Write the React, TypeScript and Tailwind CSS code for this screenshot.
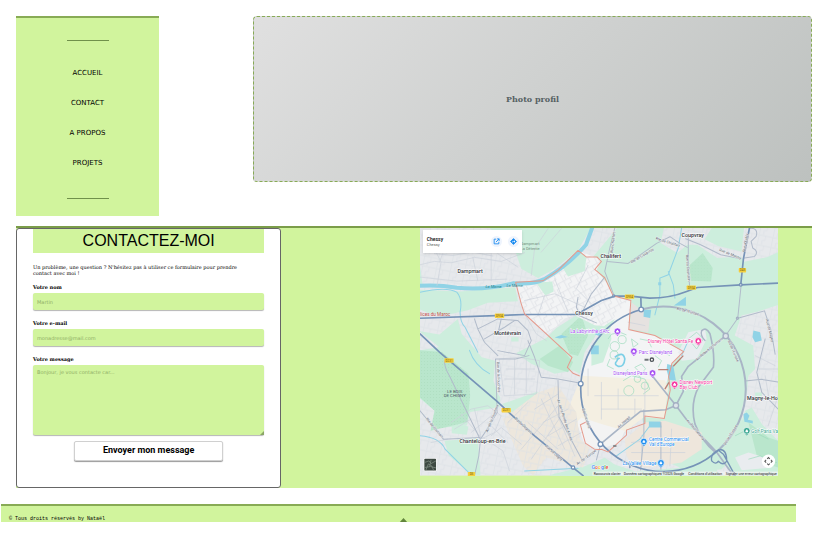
import React from 'react';

const navItems = [
  { label: 'ACCUEIL', href: '#accueil' },
  { label: 'CONTACT', href: '#contact' },
  { label: 'A PROPOS', href: '#apropos' },
  { label: 'PROJETS', href: '#projets' },
];

const towns = [
  { name: 'Dampmart', x: 129, y: 154 },
  { name: 'Chessy', x: 482, y: 277 },
  { name: 'Montévrain', x: 239, y: 339 },
  { name: 'Chalifert', x: 557, y: 108 },
  { name: 'Coupvray', x: 800, y: 46 },
  { name: 'Chanteloup-en-Brie', x: 135, y: 661 },
  { name: 'Magny-le-Ho', x: 996, y: 534 },
];

const places = [
  { name: 'La Labyrinthe d\'Arc', x: 467, y: 333, color: '#a44df2', px: 608, py: 327 },
  { name: 'Parc Disneyland', x: 672, y: 394, color: '#a44df2', px: 657, py: 387 },
  { name: 'Disneyland Paris', x: 595, y: 458, color: '#a44df2', px: 713, py: 452 },
  { name: 'Disney Hôtel Santa Fe', x: 699, y: 362, color: '#f538a0', px: 850, py: 356 },
  { name: 'Disney Newport', x: 794, y: 485, color: '#f538a0', px: 779, py: 486 },
  { name: 'Centre Commercial', x: 702, y: 656, color: '#1a8cf0', px: 687, py: 657 },
  { name: 'La Vallée Village', x: 623, y: 727, color: '#1a8cf0', px: 738, py: 721 },
  { name: 'Golf Paris Va', x: 1008, y: 631, color: '#34a58e', px: 995, py: 625 },
];

const shields = [
  { x: 241, y: 274, name: 'D934' },
  { x: 630, y: 217, name: 'D934' },
  { x: 815, y: 190, name: 'D934' },
  { x: 971, y: 138, name: 'D45' },
  { x: 90, y: 408, name: 'D231' },
  { x: 261, y: 557, name: 'D231' },
  { x: 160, y: 748, name: 'D5' },
];

const streetNames = [
  { name: 'Rte de Coupvray', x: 650, y: 124, angle: -31 },
  { name: 'Rte de Chalifert', x: 722, y: 52, angle: 18 },
  { name: 'Rue de Montry', x: 912, y: 86, angle: 22 },
  { name: 'Rue Chalifert', x: 594, y: 92, angle: -83 },
  { name: 'Rue du Courtalin', x: 813, y: 98, angle: 86 },
  { name: 'Rue d\'Esbly', x: 990, y: 90, angle: -80 },
  { name: 'Bd de l\'Europe', x: 785, y: 262, angle: 15 },
  { name: 'Bd de l\'Europe', x: 938, y: 356, angle: 66 },
  { name: 'Rue de Magny', x: 1052, y: 292, angle: 76 },
  { name: 'Av. Robert Schuman', x: 846, y: 416, angle: -40 },
  { name: 'Av. Hergé', x: 612, y: 617, angle: -42 },
  { name: 'Av. Paul Séramy', x: 814, y: 594, angle: 50 },
  { name: 'Bd de l\'Europe', x: 931, y: 669, angle: -58 },
  { name: 'Av. de l\'Europe', x: 488, y: 728, angle: -36 },
  { name: 'Rue de la Fouchère', x: 247, y: 418, angle: 88 },
  { name: 'Av. de la Fouchère', x: 220, y: 630, angle: -68 },
  { name: 'Rte de Tournan', x: 34, y: 590, angle: 50 },
  { name: 'Bd du Segrais', x: 300, y: 590, angle: 42 },
  { name: 'Av. de la Ronde des Arbres', x: 427, y: 532, angle: 72 },
  { name: 'Rue de Lagny', x: 391, y: 672, angle: 41 },
  { name: 'Bd Circulaire', x: 502, y: 560, angle: 72 },
];

const Land: React.FC = () => (
  <g>
    <rect x="17" y="18" width="1072" height="741" fill="#e7e9ec" />
    <path d="M17 18h1072v741H17z" fill="url(#blocks)" />

    {/* green land */}
    <g fill="#cdeedd">
      <path d="M225 18h303l-38 67-70 55-50 28-50-28-20-60z" />
      <path d="M17 203l120 5 165-13 8 42-90 5-60 22-60 14-60-6-23-10zM130 290l12 45 60 70 40 10-5 60 20 60-80-60-90-90-72-58 60 10z" />
      <path d="M607 18h140l-10 45 50 30 30-25 30 0 60 40 72-5 8 16 70-14 32-15v158l-60 20-50 12-20 60 55 30 6 70-20 20-5 50-15 50v120l-60 60-90 10-70-30-70-100-30-110 50-70-20-40-80-40-20-15 5-90-50-14-30-50-15-45z" />
      <path d="M890 18h97l-8 70-70-16-40-20z" />
      <path d="M17 384l60-10 60 30 120 120 0 30-90 15-10 40-107 10 10-55-60-50z" />
      <path d="M262 545l106-37 16 22-85 45zM90 655l100-8 8 112h-25l-70-60zM112 602l50 10-5 25-45-5z" />
      <path d="M400 759l110-28 60-25 30 20 60 20 130-10 90-40 40 73z" />
      <path d="M920 690l50-60 20-65 20-10 30 50 49 50v104H950z" />
      <path d="M305 392l90-45 30-30 60-38 60 30 65-20-60 40-40 60-15 65-20-10-55 10-70-30z" />
      <path d="M290 345h22v13h-22zM1020 510h20v12h-20zM17 130l8 60h-8z" />
    </g>
    <g fill="#b9e6cc">
      <path d="M17 384l65 5 80 65 5 65-8 80-110 26 12-60-44-40z" />
      <path d="M823 130l40-37 30 45-5 40-60-2zM440 335l60-55 20 60-30 60-25-5zM1000 600l60 45 29 10v80l-60-20zM375 410l60-40 40 50-15 30-60-20z" />
    </g>
    <path d="M17 384l65 5 80 65 5 65-8 80-110 26 12-60-44-40zM823 130l40-37 30 45-5 40-60-2zM440 335l60-55 20 60-30 60-25-5z" fill="url(#trees)" />

    {/* built-up areas */}
    <path d="M303 180l77-3 50-32 60-60 70 28-15 32 30 35 22 42 52 12-3 40-56 40-50-5-60-30-30 10-50 48-70-62z" fill="#f3f4f5" />
    <path d="M303 180l77-3 50-32 60-60 70 28-15 32 30 35 22 42 52 12-3 40-56 40-50-5-60-30-30 10-50 48-70-62z" fill="url(#streets)" />
    <g fill="#cdeedd">
      <path d="M440 130l50-45 25 20-5 42-50 16zM365 182l48-4 4 30-25 12z" />
    </g>
    <path d="M640 232l5 90 75 18 85 48-35 40-20 70-250-14 10-60 40-80z" fill="#f3f4f5" />
    <path d="M500 460l250 14 10 25-12 90-60-5-60 45-80 44-50-70-25 -12-5-50z" fill="#f4efe2" />
    <path d="M485 600l15-15 60 20 70 20-15 35-60 20-45-15z" fill="#f3f3f3" />
    <path d="M265 590l105-80 60-20 55 80 10 80 30 25-20 60-110-30-40 54-30-30z" fill="#ede7dd" />
    <path d="M265 590l105-80 60-20 55 80 10 80 30 25-20 60-110-30-40 54-30-30z" fill="url(#blocks)" />
    <path d="M635 700l-5-50 60-50 60-5 110 35v50l-60 40-100 15-50-10z" fill="#eee6dc" />
    <path d="M650 240l55 45-5 45-55-10z" fill="#e6e2e0" />
    <path d="M530 380l40-70 30-20-15 30 5 30-25 70-35 10z" fill="#cdeedd" />
    <path d="M820 330l50-10 5 30-30 60-45 5-10-25z" fill="#e9edf0" />
    <path d="M960 705l40-15 50 15 20 30-90 8z" fill="#e9ecef" />
  </g>
);

const Water: React.FC = () => (
  <g>
    <g fill="none" stroke="#90d3e6" strokeLinecap="round">
      <path d="M17 191q60-3 110 6 90 8 170-14 60 5 92-12 70-40 125-103l18-50" strokeWidth="12" />
      <path d="M17 210q80-18 110 0 18 20 10 60 0 30 15 45l38 75M165 384q15 45 60 70M17 640q60 5 75 40l80 79M800 18l-10 60-30 80-25 10v50l-15 60M760 148l15 40 5 40M605 700l70-50 30-40M330 745l160-8M800 400l20-45" strokeWidth="3" />
    </g>
    <g fill="#90d3e6">
      <path d="M777 250l36-26v27zM687 263h22l-3 24-20-3zM757 425l18 5 8 45-20-3-8-30zM702 597h35l3 18h-38zM1015 325l20 5 5 25-20 5-8-15zM985 575l10-5 8 10-5 12 15 3v8l-25-5zM420 346l20-8 20 6-25 5zM530 370h22v26h-24zM730 180h9v9h-9zM545 320l18 10-8 12-15-6z" />
    </g>
    <path d="M600 405q25-20 30 5-2 25-20 22-14-6-4-16 4-12 8-6" fill="none" stroke="#7ccfe6" strokeWidth="5" />
  </g>
);

const Roads: React.FC = () => (
  <g fill="none" strokeLinejoin="round" strokeLinecap="round">
    <g stroke="#ccd2db" strokeWidth="2">
      <path d="M17 128 60 118 110 122 180 106 260 118 330 92M50 60l30 60-12 70M85 95l-10 25M60 95l55 5 60-10 60 12M230 95v80M175 106l15 70M17 165l110 12 150-6M250 95l60 40M400 20l-40 60-10 80M440 20l-60 70" />
      <path d="M330 235l90-20 90 40M370 280l20-60M520 130l-35 70 50 50M420 170l40 100M330 275l35 60 30 20" />
      <path d="M255 410l60-5 60 10-10 100-95 5zM275 440h85M270 470h90M300 410v105M335 412v100" />
      <path d="M100 650l-50 10M110 600l60-40 50-10 40 30-20 50-60 30M140 575l60 70M180 560l20 85M230 580l-60 50M205 645l60 40 20 60M230 640l30-25 60 50M120 620l50-30M220 600l60 60" />
      <path d="M400 510l80 190M380 530l70 150M360 560l70-45M385 600l75-40M400 640l85-50M430 670l70-40M340 600l90 80M340 540l-60 60M320 680l110-130M350 710l90-130" />
      <path d="M560 480v110M610 500v60M660 530v50M520 440v80M540 520h190M690 480v100M560 560h120M1020 400l60 30M1030 440h59M1050 460l10 60M1089 520l-30 90M650 660l90-10M650 690h160M680 640v100M770 620l-5 110M640 300l50 10" />
    </g>
    <g stroke="#b1bbca" strokeWidth="3">
      <path d="M600 18l-15 60-15 70 27 70M578 118l62 6 85-60 40-20 30 20 22 12" />
      <path d="M820 40v90l4 65M812 50l45 18 60 30 60 12" />
      <path d="M1003 18q28 0 20 25l-15 15 5 20q20 10 5 25l-30 5" />
      <path d="M978 190l-10 98-35 50M968 288l80-22 20 60 12 70M1050 350l-25 100 15 60 49 50M990 476l50-5 49 8" />
      <path d="M190 320l60-30 60 5 30 30 10 30-20 45-80-15M190 320l20 40 40 40M210 350l60-35 30-20M180 290l10 30M260 290l-10 45M340 355l20 50 20 60 50 5 65 12" />
      <path d="M243 410l5 160-40 65-10 15-5 50-12 55M243 410h60l40-10M17 565l70 85 110-5M90 415q0 20 15 45l92 190" />
      <path d="M430 474l3 110 70 130M490 225l-5 30 10 22M500 275l30-60 40-50M485 277l60 25" />
      <path d="M687 562v80l-10 100M738 600v140M545 712l12-45" />
    </g>
    <g stroke="#a9b5c6" strokeWidth="6">
      <path d="M679 262A247 247 0 0 1 992 500 247 247 0 0 1 910 683" />
      <path d="M715 464l68 85 37 50 85 90 50 70M860 325q15-12 25 10 15 60 10 100l-45 60q-25 50-10 110 20 50 60 84M557 665l60-50 60-48 75-5 31-13M930 342l-60 50-50 40-20 30 5 45-22 42" strokeWidth="5" />
      <path d="M860 325q-5 15 10 30" strokeWidth="4" />
    </g>
    <g stroke="#7693b7" strokeWidth="5">
      <path d="M17 288l313-11 155 0 75-42 40-13h45l60 6q60 0 110-20l32-12 130-8 112-5" />
      <path d="M17 335l59 55 169 145 115 105 115 95 30 24M1003 18l-18 92-8 78M678 228l1 34" />
      <path d="M679 262A247 247 0 0 0 498 500 247 247 0 0 0 745 747 247 247 0 0 0 910 683" />
      <path d="M645 735v-8M910 683l15 12 35 64M890 715q-5-25 25-34 20 0 20 35-10 15-25 0-8 12-20-1" strokeWidth="4" />
    </g>
  </g>
);

const ContactMap: React.FC = () => (
  <svg viewBox="17 18 1072 741" className="block h-auto w-full" role="img" aria-label="Carte de Chessy">
    <defs>
      <pattern id="streets" width="38" height="28" patternUnits="userSpaceOnUse" patternTransform="rotate(-28)">
        <path d="M0 2h38M8 2v26M28 2v14h-12v12" fill="none" stroke="#dcdfe5" strokeWidth="2" />
      </pattern>
      <pattern id="blocks" width="42" height="30" patternUnits="userSpaceOnUse" patternTransform="rotate(12)">
        <path d="M0 3h42M10 3v27M30 3v14h-8v13" fill="none" stroke="#dde0e6" strokeWidth="2" />
      </pattern>
      <pattern id="trees" width="9" height="9" patternUnits="userSpaceOnUse">
        <circle cx="3" cy="3" r="1" fill="#9ed2b0" />
      </pattern>
    </defs>

    <Land />
    <Water />

    {/* resort gardens */}
    <g fill="none" stroke="#9adbbb" strokeWidth="2">
      <circle cx="600" cy="372" r="14" /><circle cx="622" cy="352" r="12" /><circle cx="642" cy="505" r="15" />
      <circle cx="598" cy="398" r="12" /><circle cx="690" cy="490" r="11" /><circle cx="668" cy="470" r="10" />
      <path d="M660 435l20-10 12 14-12 16zM650 350l20 15-15 10zM675 350l25 5 10 20M580 350l10-14 25-6 20 8M585 410l-8 20 20 10M720 400l20 15-10 20M735 385l30 15M625 475l25-15 40 10 15 30-20 15M820 350l25-20 20 20-20 30zM640 440l-12 15M1000 710l35-10 50 20M960 640l40-20 60 30" />
    </g>

    <Roads />

    {/* commune limits */}
    <g fill="none" stroke="#e59a8d" strokeWidth="3">
      <path d="M303 180l17 65 10 30 125 115 17 15-14 30 17 18 20 8M303 180l82-4 45-31 60-60 25 20h32l13 13-20 24 30 25 25 54 53 14-6 87 78 18 86 48-35 35-10 40 5 40-18 85-58-7v22l-55 20v15l-55 50-20-8-18 2-30-20-15-55 20-10" />
    </g>
    <path d="M730 442h30M805 400l-30 32M762 480l-12 20" fill="none" stroke="#b98177" strokeWidth="4" />

    <g fill="#fff" stroke="#7693b7" strokeWidth="4">
      <circle cx="679" cy="262" r="7" /><circle cx="977" cy="188" r="4" /><circle cx="498" cy="484" r="7" />
      <circle cx="557" cy="665" r="7" /><circle cx="475" cy="735" r="5" /><circle cx="597" cy="221" r="3" />
    </g>
    <g fill="#dfe5ea" stroke="#a5b1c3" strokeWidth="4">
      <circle cx="783" cy="549" r="8" /><circle cx="932" cy="341" r="8" /><circle cx="967" cy="288" r="3" />
    </g>

    <g fontFamily="Roboto, sans-serif">
      {streetNames.map((s) => (
        <text key={`${s.name}-${s.x}`} transform={`translate(${s.x} ${s.y}) rotate(${s.angle})`} fontSize="11" fill="#5f6670" stroke="#eef1f3" strokeWidth="2" paintOrder="stroke">{s.name}</text>
      ))}
      {shields.map((s) => (
        <g key={`${s.x}-${s.y}`}>
          <rect x={s.x} y={s.y} width={s.name.length > 3 ? 28 : 22} height="13" rx="2" fill="#f5cf3d" />
          <text x={s.x + (s.name.length > 3 ? 14 : 11)} y={s.y + 10} fontSize="9" fill="#735f14" textAnchor="middle">{s.name}</text>
        </g>
      ))}
      <g fontSize="12" fill="#177f8b" fontStyle="italic">
        <text x="213" y="198">La Marne</text>
        <text x="276" y="196">La Marne</text>
      </g>
      <g fontSize="12" fill="#73907f">
        <text x="318" y="70">Dampmart</text>
        <text x="318" y="83">La Détente</text>
      </g>
      <text x="17" y="280" fontSize="14" fill="#c5524b">lices du Maroc</text>
      <g fontSize="13" fill="#4f5b66">
        <text x="98" y="512">LE BOIS</text>
        <text x="88" y="524">DE CHIGNY</text>
      </g>
      {towns.map((t) => (
        <text key={t.name} x={t.x} y={t.y} fontSize="16" fontWeight="500" fill="#303236" stroke="#fff" strokeWidth="3" paintOrder="stroke">{t.name}</text>
      ))}
      {places.map((p) => (
        <g key={p.name}>
          <text x={p.x} y={p.y} fontSize="14" fill={p.color} stroke="#fff" strokeWidth="3" paintOrder="stroke">{p.name}</text>
          <path d={`M${p.px - 7} ${p.py + 7}l7 7 7-7z`} fill={p.color} />
          <circle cx={p.px} cy={p.py} r="10" fill={p.color} stroke="#fff" strokeWidth="2" />
          <path d={`M${p.px - 4} ${p.py - 1}h8v5h-8zM${p.px - 2} ${p.py - 4}h4v3h-4z`} fill="#fff" />
        </g>
      ))}
      <g fontSize="14" stroke="#fff" strokeWidth="3" paintOrder="stroke">
        <text x="794" y="499" fill="#f538a0">Bay Club</text>
        <text x="702" y="670" fill="#1a8cf0">Val d'Europe</text>
      </g>
      <circle cx="711" cy="412" r="5" fill="#fff" stroke="#4b5055" strokeWidth="4" />
      <path d="M689 409h12v6h-12zM595 668h10v5h-10z" fill="#70757a" />

      {/* satellite thumbnail */}
      <rect x="28" y="707" width="39" height="39" rx="3" fill="#fff" />
      <rect x="30" y="709" width="35" height="35" rx="2" fill="#3d4942" />
      <path d="M30 720l14-5 6 8 15-8M34 744l8-20 10 6 6 14M50 712l-4 20M30 735l18-3 17 4" stroke="#87958a" strokeWidth="2" fill="none" />

      {/* recenter control */}
      <circle cx="1060" cy="716" r="20" fill="#fff" />
      <path d="M1056 709l4-4 4 4M1056 723l4 4 4-4M1053 712l-4 4 4 4M1067 712l4 4-4 4" stroke="#555" strokeWidth="3" fill="none" />

      <text x="530" y="739" fontSize="16" fontWeight="500" stroke="#fff" strokeWidth="2" paintOrder="stroke">
        <tspan fill="#4285f4">G</tspan><tspan fill="#ea4335">o</tspan><tspan fill="#fbbc05">o</tspan><tspan fill="#4285f4">g</tspan><tspan fill="#34a853">l</tspan><tspan fill="#ea4335">e</tspan>
      </text>
      <rect x="533" y="747" width="556" height="12" fill="#f5f5f5" fillOpacity="0.7" />
      <g fontSize="10" fill="#111">
        <text x="537" y="757">Raccourcis clavier</text>
        <text x="627" y="757">Données cartographiques ©2025 Google</text>
        <text x="820" y="757">Conditions d'utilisation</text>
        <text x="932" y="757">Signaler une erreur cartographique</text>
      </g>
    </g>
  </svg>
);

const MapCard: React.FC = () => (
  <div className="absolute left-[3px] top-[2px] flex h-[23px] w-[99px] items-center bg-white pl-1 pr-[3px] font-[Roboto,sans-serif] shadow">
    <div className="flex-1">
      <div className="text-[5px] font-medium leading-[6px] text-black">Chessy</div>
      <div className="text-[4px] leading-[6px] text-[#5b5b5b]">Chessy</div>
    </div>
    <div className="flex gap-[6px]">
      <a href="#carte" aria-label="Agrandir le plan" className="flex size-[11px] items-center justify-center rounded-full bg-[#eef4fd]">
        <svg viewBox="0 0 24 24" className="size-[7px]" fill="none" stroke="#1a8cf0" strokeWidth="3">
          <path d="M11 4H4v16h16v-7M14 3h7v7M21 3 10 14" />
        </svg>
      </a>
      <a href="#itineraire" aria-label="Itinéraire" className="flex size-[11px] items-center justify-center rounded-full bg-[#eef4fd]">
        <svg viewBox="0 0 24 24" className="size-[7px]">
          <path d="M12 2 22 12 12 22 2 12z" fill="#1a8cf0" stroke="#1a8cf0" strokeWidth="3" strokeLinejoin="round" />
          <path d="M8 15v-4h6V8l4 4-4 4v-3h-4v2z" fill="#fff" />
        </svg>
      </a>
    </div>
  </div>
);

const labelClass = 'mb-[2px] block text-[5px] font-bold leading-[7px]';
const fieldClass = 'block w-full rounded-[2px] bg-[#d1f49d] px-1 font-[DejaVu_Sans,sans-serif] text-[5px] shadow-[0_1px_1px_#b5b5b5] placeholder:text-[#8fae65] focus:outline-none';

const ContactForm: React.FC = () => (
  <form
    className="flex w-1/3 flex-col rounded-[3px] border border-[#666] bg-white px-4 pb-6"
    onSubmit={(e) => e.preventDefault()}
  >
    <h1 className="bg-[#d1f49d] text-center font-[Liberation_Sans,sans-serif] text-[16px] leading-[24px]">CONTACTEZ-MOI</h1>
    <p className="mt-[11px] text-[5px] leading-[6px]">
      Un problème, une question ? N'hésitez pas à utiliser ce formulaire pour prendre<br />
      contact avec moi !
    </p>
    <div className="mt-2">
      <label htmlFor="nom" className={labelClass}>Votre nom</label>
      <input id="nom" type="text" placeholder="Martin" className={`${fieldClass} h-[17px]`} />
    </div>
    <div className="mt-[10px]">
      <label htmlFor="email" className={labelClass}>Votre e-mail</label>
      <input id="email" type="email" placeholder="monadresse@mail.com" className={`${fieldClass} h-[17px]`} />
    </div>
    <div className="mt-[10px]">
      <label htmlFor="message" className={labelClass}>Votre message</label>
      <div className="relative">
        <textarea id="message" placeholder="Bonjour, je vous contacte car..." className={`${fieldClass} h-[70px] resize-none pt-1`} />
        <svg viewBox="0 0 4 4" className="pointer-events-none absolute bottom-0 right-0 size-1">
          <path d="M4 0v4H0z" fill="#8ba566" />
        </svg>
      </div>
    </div>
    <button
      type="submit"
      className="mx-auto mt-[6px] h-5 w-[149px] rounded-[2px] border border-[#d0d0d0] bg-white font-[Roboto,sans-serif] text-[9px] font-bold shadow-[0_1px_1px_#999]"
    >
      Envoyer mon message
    </button>
  </form>
);

const App: React.FC = () => {
  return (
    <div className="bg-white font-[DejaVu_Serif,serif] text-black">
      <header className="flex items-start px-4 pt-4">
        <nav className="flex h-[200px] w-[143px] flex-col items-center border-t-2 border-[#88ab55] bg-[#d1f49d] font-[DejaVu_Sans,sans-serif]">
          <hr className="mt-[22px] w-[42px] border-t border-[#70904b]" />
          <ul className="mt-[17px] text-center text-[7px] leading-[30px]">
            {navItems.map((item) => (
              <li key={item.href}>
                <a href={item.href}>{item.label}</a>
              </li>
            ))}
          </ul>
          <hr className="mt-[20px] w-[42px] border-t border-[#70904b]" />
        </nav>
        <div className="ml-[94px] flex h-[166px] flex-1 items-center justify-center rounded-[4px] border border-dashed border-[#88ab55] bg-linear-135 from-[#e0e0e0] to-[#bdc1bf] text-[8px] font-bold text-[#566163]">
          Photo profil
        </div>
      </header>

      <main className="mx-4 mt-[10px] flex items-stretch border-t-2 border-[#7b9d49] bg-[#d1f49d]">
        <ContactForm />
        <div className="relative mb-3 ml-auto mr-[34px] w-[45%]">
          <ContactMap />
          <MapCard />
        </div>
      </main>

      <footer className="relative ml-px mr-8 mt-4 flex h-[18px] items-end border-t-2 border-[#88ab55] bg-[#d1f49d] pl-2 font-[Liberation_Mono,monospace] text-[5px] leading-[5px]">
        © Tous droits réservés by Nataël
        <a href="#accueil" aria-label="Haut de page" className="absolute -bottom-px left-1/2">
          <svg viewBox="0 0 9 5" className="block h-[5px] w-[9px]">
            <path d="M4.5 0 9 5H0z" fill="#62853c" />
          </svg>
        </a>
      </footer>
    </div>
  );
};

export default App;
